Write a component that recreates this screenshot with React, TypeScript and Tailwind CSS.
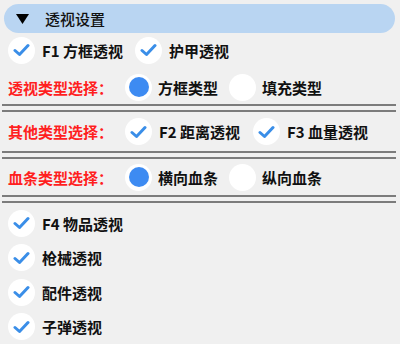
const Check = () => (
  <span className="flex h-[27px] w-[27px] shrink-0 items-center justify-center rounded-full bg-white">
    <svg width="17" height="14" viewBox="0 0 17 14" fill="none">
      <polyline points="2,7.5 6.5,11.5 15,2.5" stroke="#3a8ee8" strokeWidth="3" strokeLinecap="round" strokeLinejoin="round" />
    </svg>
  </span>
);

const Radio = ({ on }: { on?: boolean }) => (
  <span className="flex h-[27px] w-[27px] shrink-0 items-center justify-center rounded-full bg-white">
    {on && <span className="h-[20px] w-[20px] rounded-full bg-[#3d8bf2]" />}
  </span>
);

const Divider = () => (
  <div className="mx-[2px] h-[8px] w-[394px] border-y-2 border-[#7c7c7c]" />
);

const Label = ({ children }: { children: React.ReactNode }) => (
  <span className="w-[117px] shrink-0 text-[#ff1f1f]">{children}</span>
);

const Item = ({ text, w }: { text?: string; w?: string }) => (
  <div className={`flex items-center gap-[7px] ${w ?? ''}`}>
    <Check />
    {text && <span>{text}</span>}
  </div>
);

const Choice = ({ text, on, w }: { text: string; on?: boolean; w?: string }) => (
  <div className={`flex items-center gap-[6px] ${w ?? ''}`}>
    <Radio on={on} />
    <span>{text}</span>
  </div>
);

export default function App() {
  return (
    <div
      className="h-[344px] w-[400px] overflow-hidden bg-[#f0f0f0] text-[15px] font-bold leading-none text-[#111]"
      style={{ fontFamily: '"Noto Sans CJK SC", "Noto Sans", sans-serif' }}
    >
      <div className="px-[4px] pt-[4px]">
        <div className="flex h-[29px] w-[391px] items-center rounded-full bg-[#b9d5f2] pl-[12px]">
          <svg width="13" height="10" viewBox="0 0 13 10">
            <polygon points="0,0 13,0 6.5,10" fill="#000" />
          </svg>
          <span className="ml-[16px] font-medium">透视设置</span>
        </div>
      </div>

      <div className="flex h-[34px] items-center pl-[8px]">
        <Item text="F1 方框透视" w="w-[127px]" />
        <Item text="护甲透视" />
      </div>

      <div className="mt-[3px] flex h-[34px] items-center pl-[8px]">
        <Label>透视类型选择：</Label>
        <Choice text="方框类型" on w="w-[104px]" />
        <Choice text="填充类型" />
      </div>

      <Divider />

      <div className="flex h-[39px] items-center pl-[8px]">
        <Label>其他类型选择：</Label>
        <Item text="F2 距离透视" w="w-[128px]" />
        <Item text="F3 血量透视" />
      </div>

      <Divider />

      <div className="flex h-[36px] items-center pl-[8px]">
        <Label>血条类型选择：</Label>
        <Choice text="横向血条" on w="w-[104px]" />
        <Choice text="纵向血条" />
      </div>

      <Divider />

      <div className="flex flex-col pl-[8px] pt-[3px]">
        {['F4 物品透视', '枪械透视', '配件透视', '子弹透视', ''].map((t, i) => (
          <div key={i} className="flex h-[34.5px] items-center">
            <Item text={t} />
          </div>
        ))}
      </div>
    </div>
  );
}
